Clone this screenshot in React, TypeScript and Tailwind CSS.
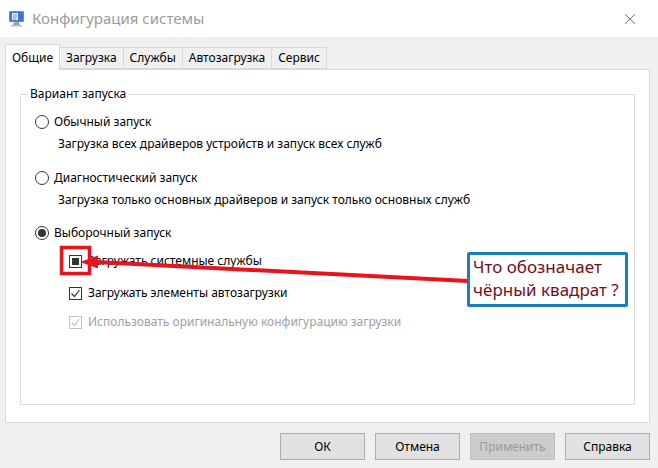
const FONT = "font-['Segoe_UI','Noto_Sans','Open_Sans',sans-serif]";

const TABS = ["Загрузка", "Службы", "Автозагрузка", "Сервис"];

function AppIcon() {
  return (
    <svg width="17" height="17" viewBox="0 0 17 17">
      <rect x="1" y="1" width="15" height="11" rx="1" fill="#7d8a99" />
      <rect x="2" y="2" width="13" height="9" fill="#3c78d0" />
      <rect x="4" y="3" width="6" height="7" fill="#e9eef5" />
      <path d="M5 5h4M5 7h4M5 9h3" stroke="#5b7fb8" strokeWidth="0.8" />
      <path d="M6 12h5l1 3H5z" fill="#9aa4ae" />
      <rect x="3" y="15" width="11" height="1.5" fill="#b8c0c8" />
    </svg>
  );
}

function Radio({ checked, label }: { checked?: boolean; label: string }) {
  return (
    <div className="flex items-center h-[22px] pl-[14px]">
      <span className="w-[14px] h-[14px] rounded-full border border-[#333] bg-white flex items-center justify-center">
        {checked && <span className="w-[8px] h-[8px] rounded-full bg-[#333]" />}
      </span>
      <span className="ml-[5px] text-[#000]">{label}</span>
    </div>
  );
}

function Check({ state, label, disabled }: { state: "on" | "mixed"; label: string; disabled?: boolean }) {
  const c = disabled ? "#c4c4c4" : "#333";
  return (
    <div className="flex items-center h-[22px] pl-[48px]">
      <span
        className={`w-[13px] h-[13px] border bg-white flex items-center justify-center ${
          disabled ? "border-[#c4c4c4]" : "border-[#333]"
        }`}
      >
        {state === "mixed" ? (
          <span className="w-[7px] h-[7px] bg-[#333]" />
        ) : (
          <svg width="11" height="11" viewBox="0 0 11 11">
            <path d="M1.5 5.5l3 3 5-6.5" fill="none" stroke={c} strokeWidth="1.2" />
          </svg>
        )}
      </span>
      <span className={`ml-[6px] ${disabled ? "text-[#a0a0a0]" : "text-black"}`}>{label}</span>
    </div>
  );
}

function Btn({ children, disabled }: { children: string; disabled?: boolean }) {
  return (
    <button
      className={`w-[85px] h-[27px] border text-[12px] ${
        disabled ? "bg-[#cccccc] border-[#bfbfbf] text-[#9a9a9a]" : "bg-[#e1e1e1] border-[#adadad] text-black"
      }`}
    >
      {children}
    </button>
  );
}

export default function App() {
  return (
    <div className={`relative w-[658px] h-[468px] overflow-hidden bg-[#f0f0f0] text-[12px] ${FONT}`}>
      <div className="h-[37px] bg-white flex items-center pl-[8px] pr-[22px]">
        <AppIcon />
        <span className="ml-[7px] text-[15px] text-[#9b9b9b]">Конфигурация системы</span>
        <svg className="ml-auto" width="12" height="12" viewBox="0 0 12 12">
          <path d="M1 1l10 10M11 1L1 11" stroke="#777" strokeWidth="1" />
        </svg>
      </div>

      <div className="pt-[7px] pl-[5px] pr-[8px]">
        <div className="flex items-end h-[25px]">
          <div className="h-[26px] w-[55px] bg-white border border-b-0 border-[#d9d9d9] flex items-center justify-center relative z-10 -mb-px">
            Общие
          </div>
          {TABS.map((t) => (
            <div
              key={t}
              className="h-[22px] px-[6px] bg-[#f0f0f0] border border-l-0 border-[#d9d9d9] flex items-center"
            >
              {t}
            </div>
          ))}
        </div>

        <div className="h-[354px] bg-white border border-[#d9d9d9] px-[14px] pt-[17px] pb-[17px]">
          <fieldset className="h-full border border-[#dcdcdc] px-0 pt-[10px] m-0">
            <legend className="ml-[7px] px-[2px] leading-[14px]">Вариант запуска</legend>
            <Radio label="Обычный запуск" />
            <div className="h-[22px] flex items-center pl-[37px]">
              Загрузка всех драйверов устройств и запуск всех служб
            </div>
            <div className="h-[12px]" />
            <Radio label="Диагностический запуск" />
            <div className="h-[22px] flex items-center pl-[37px]">
              Загрузка только основных драйверов и запуск только основных служб
            </div>
            <div className="h-[11px]" />
            <Radio checked label="Выборочный запуск" />
            <div className="h-[6px]" />
            <Check state="mixed" label="Загружать системные службы" />
            <div className="h-[10px]" />
            <Check state="on" label="Загружать элементы автозагрузки" />
            <div className="h-[7px]" />
            <Check state="on" disabled label="Использовать оригинальную конфигурацию загрузки" />
          </fieldset>
        </div>

        <div className="flex justify-end gap-[10px] mt-[10px]">
          <Btn>ОК</Btn>
          <Btn>Отмена</Btn>
          <Btn disabled>Применить</Btn>
          <Btn>Справка</Btn>
        </div>
      </div>

      {/* annotation overlay */}
      <svg className="absolute left-0 top-0 pointer-events-none" width="658" height="468">
        <rect x="61.5" y="247.5" width="28" height="26" fill="none" stroke="#e8141c" strokeWidth="3.5" />
        <line x1="96" y1="262" x2="468" y2="281" stroke="#e8141c" strokeWidth="4" />
        <path d="M80 262L98 255.5L98 268.5Z" fill="#e8141c" />
      </svg>
      <div className="absolute left-[467px] top-[252px] w-[161px] h-[55px] border-[3px] border-[#1c7cc0] rounded-[2px] bg-white pl-[3px] text-[17px] leading-[23px] text-[#7a0c18] font-['Noto_Sans',sans-serif]">
        Что обозначает
        <br />
        чёрный квадрат ?
      </div>
    </div>
  );
}
